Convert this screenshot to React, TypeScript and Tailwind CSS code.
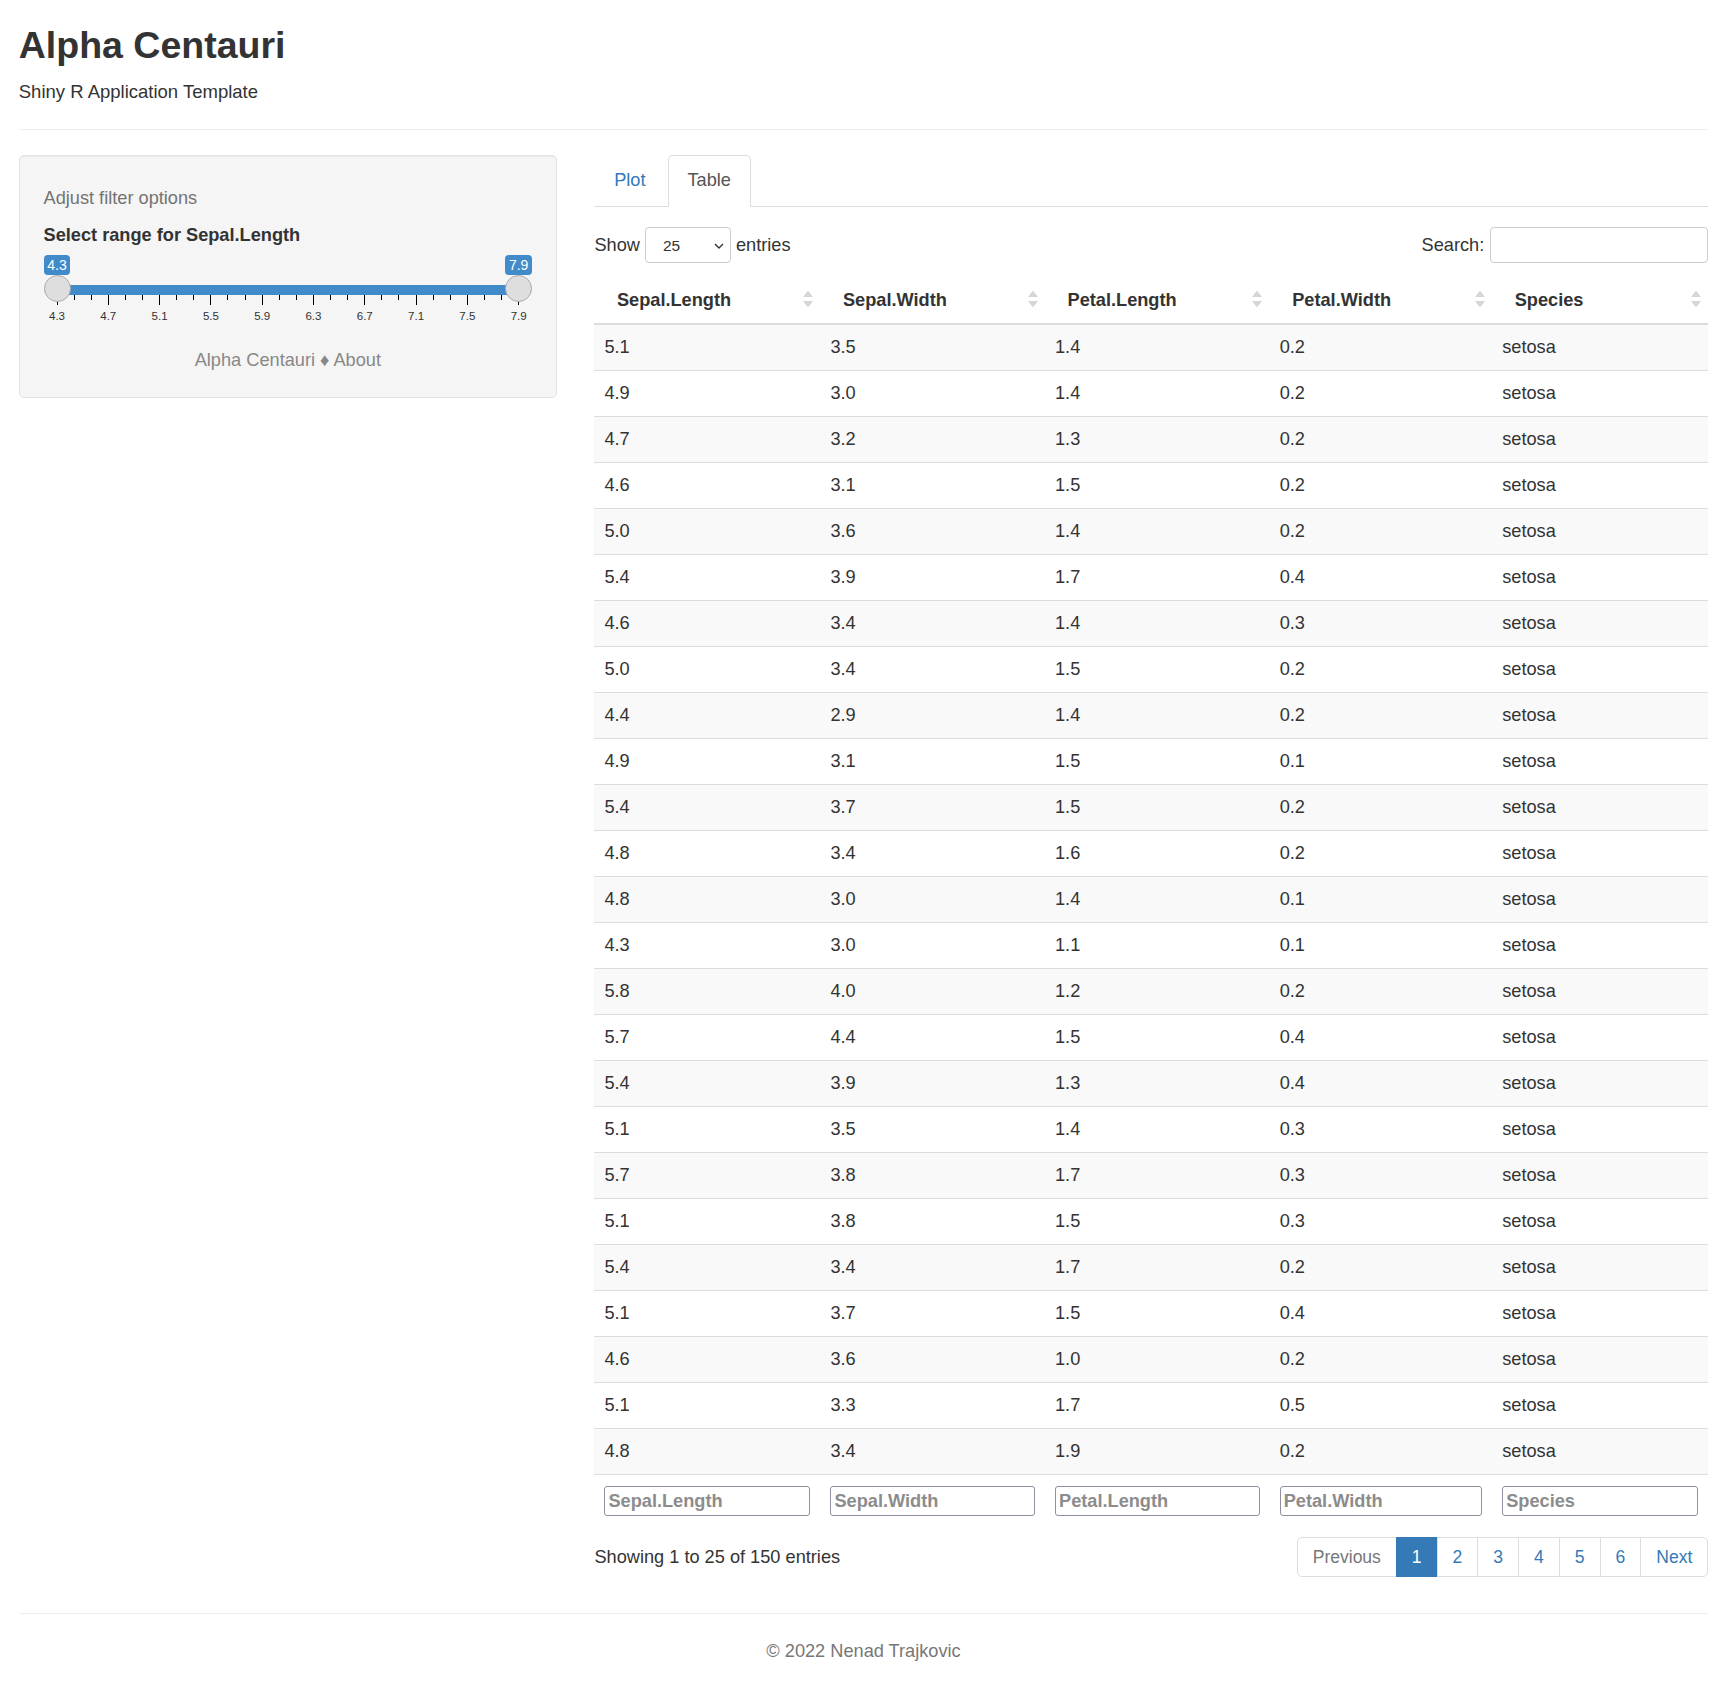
import React from 'react';

const rows: [string, string, string, string][] = [
  ['5.1', '3.5', '1.4', '0.2'],
  ['4.9', '3.0', '1.4', '0.2'],
  ['4.7', '3.2', '1.3', '0.2'],
  ['4.6', '3.1', '1.5', '0.2'],
  ['5.0', '3.6', '1.4', '0.2'],
  ['5.4', '3.9', '1.7', '0.4'],
  ['4.6', '3.4', '1.4', '0.3'],
  ['5.0', '3.4', '1.5', '0.2'],
  ['4.4', '2.9', '1.4', '0.2'],
  ['4.9', '3.1', '1.5', '0.1'],
  ['5.4', '3.7', '1.5', '0.2'],
  ['4.8', '3.4', '1.6', '0.2'],
  ['4.8', '3.0', '1.4', '0.1'],
  ['4.3', '3.0', '1.1', '0.1'],
  ['5.8', '4.0', '1.2', '0.2'],
  ['5.7', '4.4', '1.5', '0.4'],
  ['5.4', '3.9', '1.3', '0.4'],
  ['5.1', '3.5', '1.4', '0.3'],
  ['5.7', '3.8', '1.7', '0.3'],
  ['5.1', '3.8', '1.5', '0.3'],
  ['5.4', '3.4', '1.7', '0.2'],
  ['5.1', '3.7', '1.5', '0.4'],
  ['4.6', '3.6', '1.0', '0.2'],
  ['5.1', '3.3', '1.7', '0.5'],
  ['4.8', '3.4', '1.9', '0.2'],
];

const columns = ['Sepal.Length', 'Sepal.Width', 'Petal.Length', 'Petal.Width', 'Species'];
const colWidths = ['226px', '224.6px', '224.7px', '222.5px', 'auto'];

const majors = ['4.3', '4.7', '5.1', '5.5', '5.9', '6.3', '6.7', '7.1', '7.5', '7.9'];

function SortIcon() {
  return (
    <svg width="10" height="18" viewBox="0 0 10 18" className="absolute right-[7.5px] top-[17px]">
      <polygon points="0,7 5,0.5 10,7" fill="#d6d6d6" />
      <polygon points="0,11 10,11 5,17.5" fill="#d6d6d6" />
    </svg>
  );
}

function RangeSlider() {
  // 9 intervals, 2 small ticks between each pair of labels
  const ticks = Array.from({ length: 28 }, (_, i) => i);
  return (
    <div className="relative mt-[2px] h-[93px]">
      {/* line + bar */}
      <div className="absolute left-0 right-0 top-[30px] h-[10px] rounded-[10px] border border-[#ccc] bg-[#eee]" />
      <div className="absolute left-[13.5px] right-[13.5px] top-[30px] h-[10px] bg-[#428bca]" />

      {/* grid */}
      <div className="absolute left-[13.5px] right-[13.5px] top-[40px] h-[30px]">
        {ticks.map((i) => {
          const major = i % 3 === 0;
          return (
            <div
              key={i}
              className={major ? 'absolute top-0 h-[10px] w-px bg-black' : 'absolute top-0 h-[5px] w-px bg-black'}
              style={{ left: `calc(${(i / 27) * 100}% - 0.5px)` }}
            />
          );
        })}
        {majors.map((m, i) => (
          <div
            key={m}
            className="absolute top-[14px] w-[30px] -translate-x-1/2 text-center text-[11.5px] leading-[14px] text-[#333]"
            style={{ left: `${(i / 9) * 100}%` }}
          >
            {m}
          </div>
        ))}
      </div>

      {/* value labels */}
      <div className="absolute left-0 top-0 flex w-[27px] justify-center">
        <span className="rounded-[3.75px] bg-[#428bca] px-[3.75px] py-[1.25px] text-[14px] leading-[18px] text-white">
          4.3
        </span>
      </div>
      <div className="absolute right-0 top-0 flex w-[27px] justify-center">
        <span className="rounded-[3.75px] bg-[#428bca] px-[3.75px] py-[1.25px] text-[14px] leading-[18px] text-white">
          7.9
        </span>
      </div>

      {/* handles */}
      <div className="absolute left-0 top-[20px] h-[27px] w-[27px] rounded-full border border-[#ababab] bg-[#dedede]" />
      <div className="absolute right-0 top-[20px] h-[27px] w-[27px] rounded-full border border-[#ababab] bg-[#dedede]" />
    </div>
  );
}

function Sidebar() {
  return (
    <div className="mb-[25px] rounded-[5px] border border-[#e3e3e3] bg-[#f5f5f5] px-[23.75px] pb-[24.75px] pt-[23.75px] shadow-[inset_0_1px_1px_rgba(0,0,0,0.05)]">
      <div className="mb-[12.5px] mt-[6.25px] text-[#737373]">Adjust filter options</div>
      <div className="mb-[6.25px] font-bold">Select range for Sepal.Length</div>
      <RangeSlider />
      <div className="text-center text-[#888]">Alpha Centauri ♦ About</div>
    </div>
  );
}

function Pagination() {
  const pages = ['1', '2', '3', '4', '5', '6'];
  return (
    <div className="flex text-[17.5px]">
      <span className="rounded-l-[5px] border border-[#ddd] bg-white px-[15px] py-[6.5px] leading-[25px] text-[#777]">
        Previous
      </span>
      {pages.map((p) => (
        <span
          key={p}
          className={
            p === '1'
              ? '-ml-px border border-[#337ab7] bg-[#337ab7] px-[15px] py-[6.5px] leading-[25px] text-white'
              : '-ml-px border border-[#ddd] bg-white px-[15px] py-[6.5px] leading-[25px] text-[#337ab7]'
          }
        >
          {p}
        </span>
      ))}
      <span className="-ml-px rounded-r-[5px] border border-[#ddd] bg-white px-[15px] py-[6.5px] leading-[25px] text-[#337ab7]">
        Next
      </span>
    </div>
  );
}

function DataTable() {
  return (
    <div>
      <div className="mt-[20.25px] flex h-[36px] items-center justify-between">
        <div className="flex items-center gap-[5px]">
          <span>Show</span>
          <div className="relative flex h-[36px] w-[86px] items-center rounded-[4px] border border-[#ccc] bg-white pl-[17px] text-[15.5px]">
            25
            <svg width="10" height="6" viewBox="0 0 10 6" className="absolute right-[6px] top-[15px]">
              <path d="M1 1l4 4 4-4" fill="none" stroke="#333" strokeWidth="1.4" />
            </svg>
          </div>
          <span>entries</span>
        </div>
        <div className="flex items-center gap-[6px]">
          <span>Search:</span>
          <div className="h-[36px] w-[218px] rounded-[4px] border border-[#ccc] bg-white" />
        </div>
      </div>

      <table className="mt-[10px] w-full table-fixed border-separate border-spacing-0">
        <colgroup>
          {colWidths.map((w, i) => (
            <col key={i} style={{ width: w }} />
          ))}
        </colgroup>
        <thead>
          <tr>
            {columns.map((c) => (
              <th
                key={c}
                className="relative border-b-2 border-[#ddd] pb-[10px] pl-[22.5px] pr-[37.5px] pt-[15px] text-left font-bold leading-[25px]"
              >
                {c}
                <SortIcon />
              </th>
            ))}
          </tr>
        </thead>
        <tbody>
          {rows.map((r, i) => (
            <tr key={i} className={i % 2 === 0 ? 'bg-[#f9f9f9]' : 'bg-white'}>
              {[...r, 'setosa'].map((v, j) => (
                <td key={j} className="border-b border-[#ddd] px-[10px] py-[10px] leading-[25px]">
                  {v}
                </td>
              ))}
            </tr>
          ))}
        </tbody>
        <tfoot>
          <tr>
            {columns.map((c) => (
              <th key={c} className="px-[10px] pb-[10px] pt-[11px] text-left">
                <input
                  type="text"
                  placeholder={c}
                  className="block h-[30px] w-full rounded-[3px] border border-[#8f8f9d] bg-white px-[3px] font-bold placeholder:text-[#8c8c8c]"
                />
              </th>
            ))}
          </tr>
        </tfoot>
      </table>

      <div className="mt-[11px] flex items-center justify-between">
        <div>Showing 1 to 25 of 150 entries</div>
        <Pagination />
      </div>
    </div>
  );
}

export default function App() {
  return (
    <div className="min-h-screen bg-white px-[18.75px] font-['Liberation_Sans',Arial,Helvetica,sans-serif] text-[18.2px] leading-[25px] text-[#333]">
      <h2 className="mb-[12.5px] mt-[25px] text-[37.5px] font-bold leading-[41.25px]">Alpha Centauri</h2>
      <div className="text-[18.5px]">Shiny R Application Template</div>
      <hr className="mb-[25px] mt-[25px] border-t border-[#eee]" />

      <div className="grid grid-cols-[538.17px_1fr] items-start gap-[37.5px]">
        <Sidebar />
        <div>
          <ul className="flex border-b border-[#ddd]">
            <li className="-mb-px mr-[2.5px]">
              <span className="block rounded-t-[5px] border border-transparent px-[18.75px] py-[12.5px] leading-[25px] text-[#337ab7]">
                Plot
              </span>
            </li>
            <li className="-mb-px mr-[2.5px]">
              <span className="block rounded-t-[5px] border border-[#ddd] border-b-transparent bg-white px-[18.75px] py-[12.5px] leading-[25px] text-[#555]">
                Table
              </span>
            </li>
          </ul>
          <DataTable />
        </div>
      </div>

      <hr className="mt-[36px] border-t border-[#eee]" />
      <div className="pb-[19.5px] pt-[24.5px] text-center text-[#777]">© 2022 Nenad Trajkovic</div>
    </div>
  );
}
